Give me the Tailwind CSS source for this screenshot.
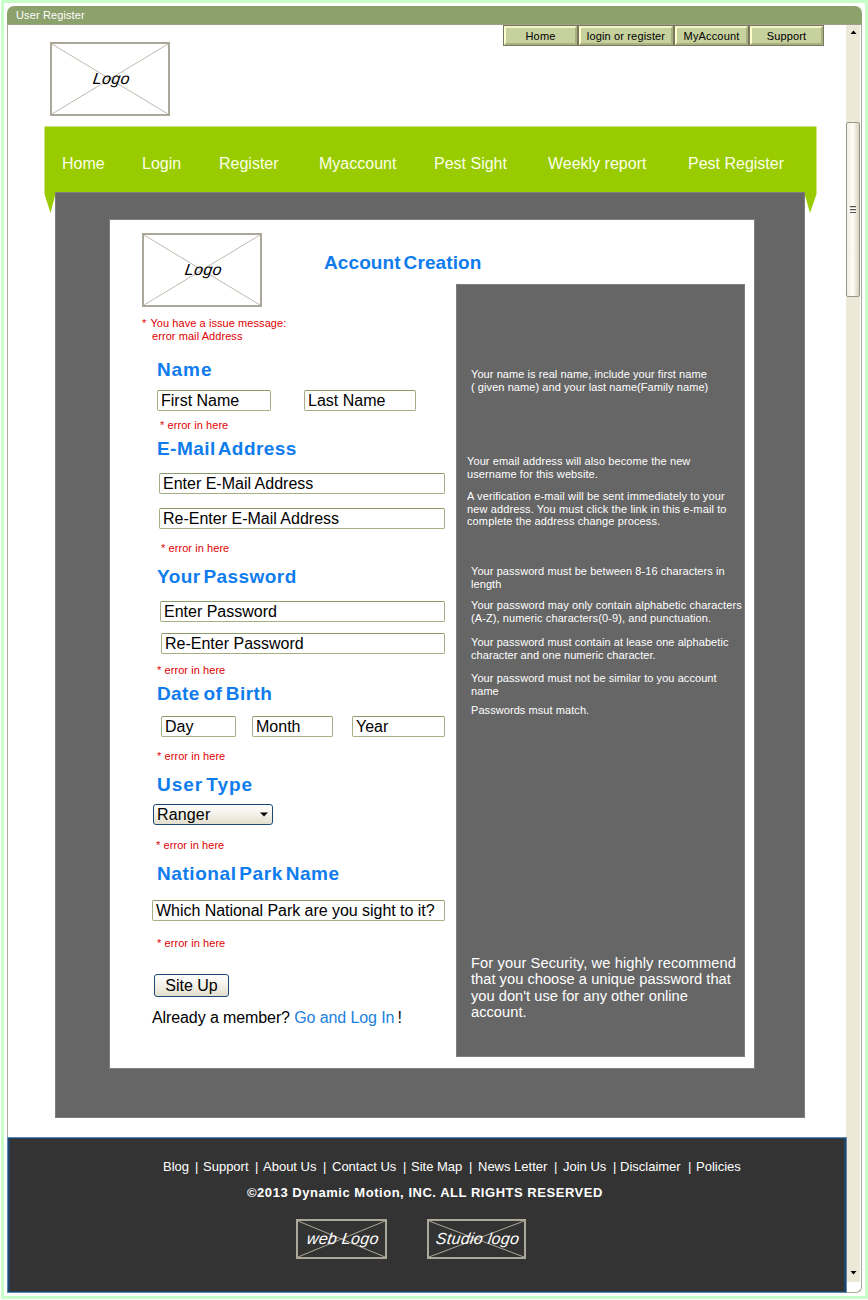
<!DOCTYPE html>
<html lang="en">
<head>
<meta charset="utf-8">
<title>User Register</title>
<script src="https://cdn.jsdelivr.net/npm/@tailwindcss/browser@4"></script>
</head>
<body class="bg-white font-['Liberation_Sans',Arial,sans-serif] text-black">
<div class="h-[1300px] w-[868px] overflow-hidden pb-px pl-px">
<div class="h-[1299px] w-[867px] border-[3px] border-[#c8ffc8] p-[3px]">
<div class="flex h-[1287px] w-[855px] flex-col">

  <!-- Title bar -->
  <div class="h-[19px] shrink-0 rounded-t-[7px] border-b border-[#a09f8c] bg-[#8ca26c] pl-[9px] text-[11px] leading-[18px] tracking-[0.12px] text-white">User Register</div>

  <div class="flex h-[1268px]">
    <div class="flex w-[839px] shrink-0 flex-col">
      <main class="h-[1112px] border-l border-[#aca899]">

        <header class="flex h-[101px] justify-between pl-[42px] pr-[22px]">
          <div class="relative mt-[17px] flex h-[74px] w-[120px] items-center justify-center border-2 border-[#aca899]">
            <svg class="absolute inset-0 size-full" viewBox="0 0 116 70" preserveAspectRatio="none" stroke="#bdb9ae"><path d="M0 0L116 70M116 0L0 70"/></svg>
            <span class="relative -skew-x-8 pl-[3px] text-[16px] italic tracking-[0.3px]">Logo</span>
          </div>
          <div class="flex h-[21px] text-center text-[11px] tracking-[0.15px]">
            <div class="w-[75px] border border-[#77785f] bg-[#c6d19d]"><div class="h-[19px] border-2 border-b-[#a7b07e] border-l-[#ffffcc] border-r-[#a7b07e] border-t-[#f4f7c4] leading-[16px]">Home</div></div>
            <div class="w-[96px] border border-[#77785f] bg-[#c6d19d]"><div class="h-[19px] border-2 border-b-[#a7b07e] border-l-[#ffffcc] border-r-[#a7b07e] border-t-[#f4f7c4] leading-[16px]">login or register</div></div>
            <div class="w-[75px] border border-[#77785f] bg-[#c6d19d]"><div class="h-[19px] border-2 border-b-[#a7b07e] border-l-[#ffffcc] border-r-[#a7b07e] border-t-[#f4f7c4] leading-[16px]">MyAccount</div></div>
            <div class="w-[75px] border border-[#77785f] bg-[#c6d19d]"><div class="h-[19px] border-2 border-b-[#a7b07e] border-l-[#ffffcc] border-r-[#a7b07e] border-t-[#f4f7c4] leading-[16px]">Support</div></div>
          </div>
        </header>

        <!-- Ribbon navigation -->
        <nav class="relative ml-[36px] h-[87px] w-[773px]">
          <svg class="absolute inset-0" width="773" height="87" fill="#99cc00"><path d="M0.5 1Q0.5 0.5 1 0.5H772Q772.5 0.5 772.5 1V68L766 87L760 66H12L6.500 87L0.500 68Z"/></svg>
          <div class="relative flex pl-[18px] pt-[28px] text-[16px] leading-[20px] text-[#fbffe8]">
            <span class="w-[80px]">Home</span><span class="w-[77px]">Login</span><span class="w-[100px]">Register</span><span class="w-[115px]">Myaccount</span><span class="w-[114px]">Pest Sight</span><span class="w-[140px]">Weekly report</span><span class="whitespace-nowrap">Pest Register</span>
          </div>
        </nav>

        <section class="relative -mt-[21px] ml-[47px] h-[926px] w-[750px] border border-[#7d7d7d] bg-[#666666] pl-[53px] pt-[26px]">
          <div class="flex h-[850px] w-[646px] border border-[#7d7d7d] bg-white">

            <form class="flex w-[346px] shrink-0 flex-col items-start pt-[13px]">
              <div class="ml-[32px] flex">
                <div class="relative flex h-[74px] w-[120px] items-center justify-center border-2 border-[#aca899]">
                  <svg class="absolute inset-0 size-full" viewBox="0 0 116 70" preserveAspectRatio="none" stroke="#bdb9ae"><path d="M0 0L116 70M116 0L0 70"/></svg>
                  <span class="relative -skew-x-8 pl-[3px] text-[16px] italic tracking-[0.3px]">Logo</span>
                </div>
                <h1 class="ml-[62px] mt-[17px] h-[24px] whitespace-nowrap pt-px text-[19px] font-bold leading-[24px] tracking-[0.1px] text-[#0f7cee] [word-spacing:-2.5px]">Account Creation</h1>
              </div>
              <p class="ml-[32px] mt-[10px] h-[26px] text-[11px] leading-[13px] tracking-[0.07px] text-[#e00000]">* &#8202;You have a issue message:<br><span class="ml-[10px]">error mail Address</span></p>

              <h2 class="ml-[47px] mt-[14px] h-[24px] pt-px text-[19px] font-bold leading-[24px] tracking-[0.9px] text-[#0f7cee]">Name</h2>
              <div class="ml-[47px] mt-[9px] flex gap-[33px] text-[16px] leading-[19px]">
                <div class="h-[21px] w-[114px] rounded-xs border border-[#a5ae84] border-t-[#8b9a66] pl-[3px]">First Name</div>
                <div class="h-[21px] w-[112px] rounded-xs border border-[#a5ae84] border-t-[#8b9a66] pl-[3px]">Last Name</div>
              </div>
              <p class="ml-[50px] mt-[7px] text-[11px] leading-[14px] tracking-[0.07px] text-[#e00000]">* error in here</p>

              <h2 class="ml-[47px] mt-[4px] h-[24px] pt-px text-[19px] font-bold leading-[24px] tracking-[0.45px] text-[#0f7cee] [word-spacing:-3px]">E-Mail Address</h2>
              <div class="ml-[49px] mt-[13px] h-[21px] w-[286px] rounded-xs border border-[#a5ae84] border-t-[#8b9a66] pl-[3px] text-[16px] leading-[19px]">Enter E-Mail Address</div>
              <div class="ml-[49px] mt-[14px] h-[21px] w-[286px] rounded-xs border border-[#a5ae84] border-t-[#8b9a66] pl-[3px] text-[16px] leading-[19px]">Re-Enter E-Mail Address</div>
              <p class="ml-[51px] mt-[12px] text-[11px] leading-[14px] tracking-[0.07px] text-[#e00000]">* error in here</p>

              <h2 class="ml-[47px] mt-[9px] h-[24px] pt-px text-[19px] font-bold leading-[24px] tracking-[0.45px] text-[#0f7cee] [word-spacing:-3px]">Your Password</h2>
              <div class="ml-[50px] mt-[13px] h-[21px] w-[285px] rounded-xs border border-[#a5ae84] border-t-[#8b9a66] pl-[3px] text-[16px] leading-[19px]">Enter Password</div>
              <div class="ml-[51px] mt-[11px] h-[21px] w-[284px] rounded-xs border border-[#a5ae84] border-t-[#8b9a66] pl-[3px] text-[16px] leading-[19px]">Re-Enter Password</div>
              <p class="ml-[47px] mt-[9px] text-[11px] leading-[14px] tracking-[0.07px] text-[#e00000]">* error in here</p>

              <h2 class="ml-[47px] mt-[4px] h-[24px] pt-px text-[19px] font-bold leading-[24px] tracking-[0.4px] text-[#0f7cee] [word-spacing:-2px]">Date of Birth</h2>
              <div class="ml-[51px] mt-[11px] flex text-[16px] leading-[19px]">
                <div class="h-[21px] w-[75px] rounded-xs border border-[#a5ae84] border-t-[#8b9a66] pl-[3px]">Day</div>
                <div class="ml-[16px] h-[21px] w-[81px] rounded-xs border border-[#a5ae84] border-t-[#8b9a66] pl-[3px]">Month</div>
                <div class="ml-[19px] h-[21px] w-[93px] rounded-xs border border-[#a5ae84] border-t-[#8b9a66] pl-[3px]">Year</div>
              </div>
              <p class="ml-[47px] mt-[12px] text-[11px] leading-[14px] tracking-[0.07px] text-[#e00000]">* error in here</p>

              <h2 class="ml-[47px] mt-[9px] h-[24px] pt-px text-[19px] font-bold leading-[24px] tracking-[0.95px] text-[#0f7cee] [word-spacing:-3px]">User Type</h2>
              <div class="ml-[43px] mt-[8px] flex h-[21px] w-[120px] items-center justify-between rounded-[3px] border border-[#1f4a78] bg-linear-to-b from-white via-[#f3f1e8] to-[#e3dfce] pl-[3px] pr-[4px] text-[16px] leading-[19px] tracking-[0.15px]">Ranger
                <svg width="8" height="5"><path d="M0 0.500H8L4 4.500Z"/></svg>
              </div>
              <p class="ml-[46px] mt-[13px] text-[11px] leading-[14px] tracking-[0.07px] text-[#e00000]">* error in here</p>

              <h2 class="ml-[47px] mt-[9px] h-[24px] pt-px text-[19px] font-bold leading-[24px] tracking-[0.57px] text-[#0f7cee] [word-spacing:-3px]">National Park Name</h2>
              <div class="ml-[42px] mt-[15px] h-[21px] w-[293px] whitespace-nowrap rounded-xs border border-[#a5ae84] border-t-[#8b9a66] pl-[3px] text-[16px] leading-[19px] tracking-[-0.04px]">Which National Park are you sight to it?</div>
              <p class="ml-[47px] mt-[15px] text-[11px] leading-[14px] tracking-[0.07px] text-[#e00000]">* error in here</p>

              <button type="button" class="ml-[44px] mt-[24px] h-[23px] w-[75px] rounded-[3px] border border-[#1f4a78] bg-linear-to-b from-white via-[#f3f1e8] to-[#e3dfce] text-[16px] leading-[21px]">Site Up</button>
              <p class="ml-[42px] mt-[11px] whitespace-nowrap text-[16px] leading-[20px] tracking-[-0.1px]">Already a member? <span class="text-[#1b80e0]">Go and Log In</span><span class="ml-[3px]">!</span></p>
            </form>

            <!-- Help panel -->
            <aside class="mt-[64px] flex h-[773px] w-[289px] shrink-0 flex-col border border-[#7d7d7d] bg-[#666666] pl-[14px] text-[11px] leading-[12.7px] tracking-[0.07px] whitespace-nowrap text-white">
              <p class="mt-[83px] h-[25px]">Your name is real name, include your first name<br>( given name) and your last name(Family name)</p>
              <p class="-ml-[4px] mt-[62px] h-[25px] tracking-[0.1px]">Your email address will also become the new<br>username for this website.</p>
              <p class="-ml-[4px] mt-[10px] h-[38px] tracking-[0.12px]">A verification e-mail will be sent immediately to your<br>new address. You must click the link in this e-mail to<br>complete the address change process.</p>
              <p class="mt-[37px] h-[25px]">Your password must be between 8-16 characters in<br>length</p>
              <p class="mt-[9px] h-[25px] tracking-[0.1px]">Your password may only contain alphabetic characters<br>(A-Z), numeric characters(0-9), and punctuation.</p>
              <p class="mt-[12px] h-[25px]">Your password must contain at lease one alphabetic<br>character and one numeric character.</p>
              <p class="mt-[11px] h-[25px]">Your password must not be similar to you account<br>name</p>
              <p class="mt-[7px] h-[13px]">Passwords msut match.</p>
              <p class="mt-[238px] text-[14.67px] leading-[16.4px] tracking-[0.02px]"><span class="tracking-[0.1px]">For your Security, we highly recommend</span><br>that you choose a unique password that<br>you don't use for any other online<br>account.</p>
            </aside>
          </div>
        </section>
      </main>

      <footer class="relative h-[156px] w-[840px] border border-[#5f86ac] bg-[#333333] text-white">
        <div class="h-[154px] border-2 border-b border-t border-[#1f4568]">
          <div class="flex pl-[153px] pt-[19px] text-[13px] leading-[18px] whitespace-nowrap">
            <a class="w-[32px]">Blog</a><span class="w-[8px]">|</span><a class="w-[52px]">Support</a><span class="w-[8px]">|</span><a class="w-[60px]">About Us</a><span class="w-[9px]">|</span><a class="w-[71px]">Contact Us</a><span class="w-[8px]">|</span><a class="w-[58px]">Site Map</a><span class="w-[9px]">|</span><a class="w-[76px]">News Letter</a><span class="w-[9px]">|</span><a class="w-[50px]">Join Us</a><span class="w-[7px]">|</span><a class="w-[68px]">Disclaimer</a><span class="w-[8px]">|</span><a>Policies</a>
          </div>
          <p class="ml-[237px] mt-[8px] text-[13px] font-bold leading-[18px] tracking-[0.53px] whitespace-nowrap">©2013 Dynamic Motion, INC. ALL RIGHTS RESERVED</p>
          <div class="ml-[286px] mt-[17px] flex gap-[40px]">
            <div class="relative flex h-[40px] w-[91px] items-center justify-center border-2 border-[#aca899]">
              <svg class="absolute inset-0 size-full" viewBox="0 0 87 36" preserveAspectRatio="none" stroke="#aca899"><path d="M0 0L87 36M87 0L0 36"/></svg>
              <span class="relative -skew-x-8 whitespace-nowrap pl-[3px] text-[16px] italic tracking-[0.3px]">web Logo</span>
            </div>
            <div class="relative flex h-[40px] w-[99px] items-center justify-center border-2 border-[#aca899]">
              <svg class="absolute inset-0 size-full" viewBox="0 0 95 36" preserveAspectRatio="none" stroke="#aca899"><path d="M0 0L95 36M95 0L0 36"/></svg>
              <span class="relative -skew-x-8 whitespace-nowrap pl-[3px] text-[16px] italic tracking-[0.3px]">Studio logo</span>
            </div>
          </div>
        </div>
      </footer>
    </div>

    <!-- Scrollbar -->
    <div class="w-[16px] rounded-br-[6px] border-b border-r border-[#aca899]">
      <div class="flex h-[1257px] w-[14px] flex-col items-center bg-[#ece9d8]">
        <svg class="mt-[5px] shrink-0" width="7" height="4"><path d="M0.500 4L3.500 0.500L6.500 4Z"/></svg>
        <div class="mt-[88px] flex h-[175px] w-[14px] shrink-0 items-center justify-center rounded-xs border border-[#97968a] bg-linear-to-r from-[#f1efe6] via-[#fdfcf6] to-[#d6d2bf]">
          <div class="flex w-[6px] flex-col">
            <i class="h-px bg-[#55544a]"></i><i class="h-px bg-[#d8d5c6]"></i><i class="h-px bg-white"></i><i class="h-px bg-[#55544a]"></i><i class="h-px bg-[#d8d5c6]"></i><i class="h-px bg-white"></i><i class="h-px bg-[#55544a]"></i>
          </div>
        </div>
        <svg class="mb-[7px] mt-auto shrink-0" width="7" height="4"><path d="M0.500 0L3.500 3.500L6.500 0Z"/></svg>
      </div>
    </div>
  </div>
</div>
</div>
</div>
</body>
</html>
